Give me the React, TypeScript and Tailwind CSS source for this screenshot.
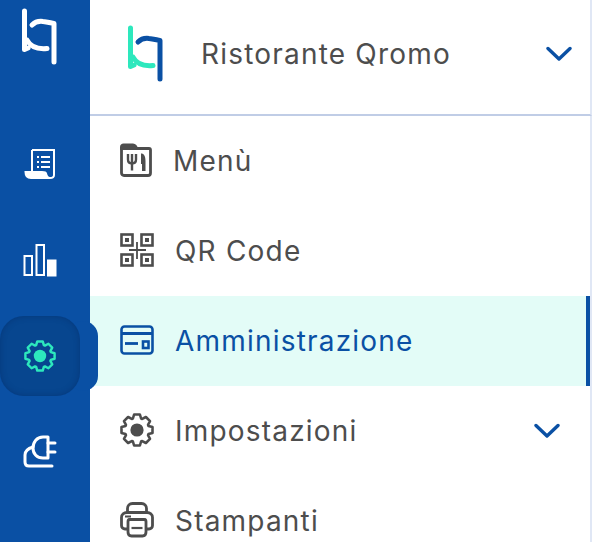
const Logo = ({ a, b, className }: { a: string; b: string; className: string }) => (
  <svg viewBox="0 0 40 58" className={className} fill="none" strokeLinecap="round" strokeLinejoin="round" strokeWidth="5">
    <path d="M3.500 4V42.500L7 41M6 33C9 39 15 42.500 26 41.500" stroke={a} />
    <path d="M11 18C14 15 18 14 22 14.500C26 14.800 30 16 33 16.500V55" stroke={b} />
  </svg>
);

const DocIcon = () => (
  <svg viewBox="0 0 32 32" width="32" height="32" fill="none" stroke="#fff" strokeWidth="2">
    <path d="M8 2H30V27C30 29 28 30 26 30" />
    <path d="M8 2V24H1.500C1.500 28 4 30 7 30H26C24 30 22.500 28 22 25.500C21.800 24.400 20 24 18 24H8" fill="#fff" />
    <path d="M13 9h2M17 9h9M13 14h2M17 14h9M13 19h2M17 19h9" strokeWidth="2.200" />
  </svg>
);

const ChartIcon = () => (
  <svg viewBox="0 0 34 34" width="34" height="34" fill="none" stroke="#fff" strokeWidth="2">
    <rect x="1.500" y="13" width="7.500" height="19" />
    <rect x="13.500" y="2" width="7.500" height="30" />
    <rect x="25" y="17.500" width="7.500" height="15" fill="#fff" />
  </svg>
);

const gearPath = (() => {
  const c = 17;
  const pts: string[] = [];
  for (let i = 0; i < 8; i++) {
    const t = (i * Math.PI) / 4;
    const at = (r: number, off: number) => {
      const x = c + r * Math.sin(t) + off * Math.cos(t);
      const y = c - r * Math.cos(t) + off * Math.sin(t);
      return `${x.toFixed(2)} ${y.toFixed(2)}`;
    };
    pts.push(at(11.5, -4.1), at(15.5, -2.9), at(15.5, 2.9), at(11.5, 4.1));
  }
  return `M${pts.join("L")}Z`;
})();

const GearIcon = ({ color, size }: { color: string; size: number }) => (
  <svg viewBox="0 0 34 34" width={size} height={size} fill="none" stroke={color} strokeWidth="2.600" strokeLinejoin="round">
    <path d={gearPath} />
    <circle cx="17" cy="17" r="6.600" fill={color} stroke="none" />
  </svg>
);

const PlugIcon = () => (
  <svg viewBox="0 0 34 34" width="34" height="34" className="-translate-y-[1px]" fill="none" stroke="#fff" strokeWidth="3" strokeLinecap="round" strokeLinejoin="round">
    <path d="M25 3H20C14 3 10 8 10 14C10 20 14 24 20 24H25V3Z" />
    <path d="M25 9H32M25 18H32" />
    <path d="M10 13C5 14.500 2 17 2 21V28C2 30.500 3.500 32 6 32H29" />
  </svg>
);

const MenuIcon = () => (
  <svg viewBox="0 0 32 34" width="32" height="34" fill="none">
    <path d="M1.500 30V7C1.500 6 2 5.500 3 5.500H29C30 5.500 30.500 6 30.500 7V30C30.500 31.500 29.500 32.500 28 32.500H4C2.500 32.500 1.500 31.500 1.500 30Z" stroke="#4d4d4d" strokeWidth="2.800" />
    <path d="M0 7V4C0 2 1.500 0.500 3.500 0.500H13C15.500 0.500 17.500 2.500 18.500 6.500V7Z" fill="#4d4d4d" />
    <path d="M8 11V16.500C8 19 9.500 20.500 12 20.500M12 11V27.500M16 11V16.500C16 19 14.500 20.500 12 20.500" stroke="#4d4d4d" strokeWidth="2.400" />
    <path d="M21 10.500C24 10.500 25.500 13 25.500 18V28H22V21H21Z" fill="#4d4d4d" />
  </svg>
);

const QrIcon = () => (
  <svg viewBox="0 0 34 34" width="34" height="34" fill="none" stroke="#4d4d4d">
    {[[1.500, 1.500], [21.500, 1.500], [1.500, 21.500], [21.500, 21.500]].map(([x, y]) => (
      <g key={`${x}-${y}`}>
        <rect x={x} y={y} width="11" height="11" strokeWidth="2.600" />
        <rect x={x + 3.5} y={y + 3.5} width="4" height="4" fill="#4d4d4d" stroke="none" />
      </g>
    ))}
    <path d="M17 9V26M9 17H26" strokeWidth="1.800" />
  </svg>
);

const CardIcon = () => (
  <svg viewBox="0 0 34 30" width="34" height="30" fill="none" stroke="#0a50a4" strokeWidth="2.600">
    <rect x="1.500" y="1.500" width="31" height="27" rx="3" />
    <path d="M1.500 8.500H32.500" strokeWidth="3" />
    <path d="M5 18.500H18" strokeWidth="2.800" />
    <rect x="23" y="16.500" width="5.500" height="6.500" />
  </svg>
);

const PrinterIcon = () => (
  <svg viewBox="0 0 34 36" width="34" height="36" fill="none" stroke="#4d4d4d" strokeWidth="2.800">
    <path d="M7.500 11V6.500C7.500 3.500 9.500 1.500 12.500 1.500H21.500C24.500 1.500 26.500 3.500 26.500 6.500V11" />
    <path d="M8 27H5C3 27 1.500 25.500 1.500 23.500V15.500C1.500 12.500 4 10.500 7 10.500H27C30 10.500 32.500 12.500 32.500 15.500V23.500C32.500 25.500 31 27 29 27H26" />
    <path d="M8 19.500C8 18 9 17.500 10 17.500H24C25 17.500 26 18 26 19.500V30C26 32.500 24.500 34 22.500 34H11.500C9.500 34 8 32.500 8 30Z" />
    <path d="M5 14.500H11M8 17.500H26" strokeWidth="1.800" />
    <path d="M11.500 26H22.500" strokeWidth="2.200" />
  </svg>
);

const Chevron = () => (
  <svg viewBox="0 0 26 16" width="26" height="16" fill="none" stroke="#0a50a4" strokeWidth="3.400" strokeLinecap="round" strokeLinejoin="round">
    <path d="M2 2.500L13 13L24 2.500" />
  </svg>
);

const rows = [
  { icon: <MenuIcon />, label: "Menù", iconW: "w-[53px]" },
  { icon: <QrIcon />, label: "QR Code", iconW: "w-[55px]" },
  { icon: <CardIcon />, label: "Amministrazione", iconW: "w-[55px]", active: true },
  { icon: <GearIcon color="#4d4d4d" size={34} />, label: "Impostazioni", iconW: "w-[55px]", chevron: true },
  { icon: <PrinterIcon />, label: "Stampanti", iconW: "w-[55px]" },
];

export default function App() {
  return (
    <div className="flex h-[542px] w-[592px] overflow-hidden bg-white font-['Inter',sans-serif] text-[#4d4d4d]">
      <aside className="relative z-10 flex w-[90px] shrink-0 flex-col bg-[#0a50a4]">
        <div className="h-[116px] pt-[7px] pl-[21px]">
          <Logo a="#fff" b="#fff" className="h-[58px] w-[40px]" />
        </div>
        <div className="flex h-[96px] items-center justify-center pr-[10px]"><DocIcon /></div>
        <div className="flex h-[96px] items-center justify-center pr-[10px]"><ChartIcon /></div>
        <div className="relative flex h-[96px] items-center pr-[10px]">
          <div className="absolute top-[13px] right-[-8px] h-[70px] w-[30px] rounded-[16px] bg-[#0a50a4]" />
          <div className="relative flex h-[80px] w-[80px] items-center justify-center rounded-[24px] bg-[#07468f] shadow-[inset_0_0_6px_rgba(0,30,80,0.35)]">
            <GearIcon color="#2de8bd" size={32} />
          </div>
        </div>
        <div className="flex h-[96px] items-center justify-center pr-[10px]"><PlugIcon /></div>
      </aside>
      <main className="flex h-[542px] w-[502px] flex-col overflow-hidden">
        <header className="flex h-[116px] shrink-0 items-center border-r-2 border-b-2 border-r-[#e0e7f5] border-b-[#c0cde6] pr-[18px] pl-[37px]">
          <Logo a="#2de8bd" b="#0a50a4" className="h-[58px] w-[40px] -translate-y-[4px]" />
          <span className="ml-[34px] flex-1 pb-[6px] text-[28px] leading-none tracking-[1.2px]">Ristorante Qromo</span>
          <span className="pb-[6px]"><Chevron /></span>
        </header>
        <nav className="flex flex-col border-r-2 border-r-[#e0e7f5]">
          {rows.map((r) => (
            <div
              key={r.label}
              className={
                r.active
                  ? "flex h-[90px] shrink-0 items-center border-r-4 border-r-[#0a50a4] bg-[#e3fcf7] pl-[30px] text-[#0a50a4]"
                  : "flex h-[90px] shrink-0 items-center pr-[30px] pl-[30px]"
              }
            >
              <span className={`${r.iconW} -translate-y-[1px]`}>{r.icon}</span>
              <span className="flex-1 text-[28px] leading-none tracking-[1.2px]">{r.label}</span>
              {r.chevron && <Chevron />}
            </div>
          ))}
        </nav>
      </main>
    </div>
  );
}
